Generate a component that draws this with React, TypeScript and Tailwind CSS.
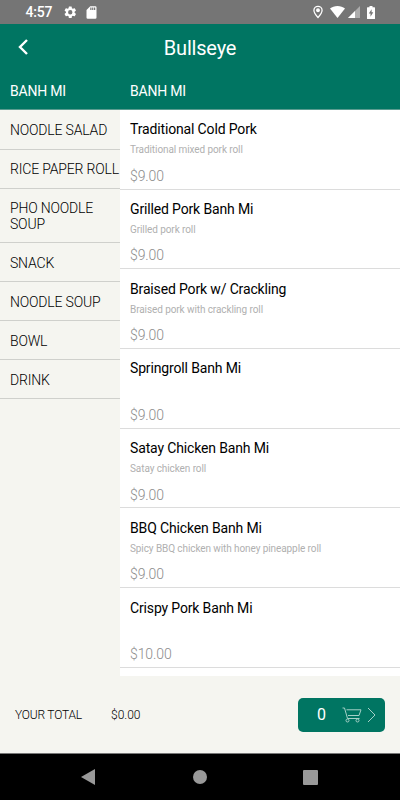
import clsx from 'clsx'

const categories = [
    'BANH MI',
    'NOODLE SALAD',
    'RICE PAPER ROLL',
    'PHO NOODLE SOUP',
    'SNACK',
    'NOODLE SOUP',
    'BOWL',
    'DRINK',
]

const items = [
    { name: 'Traditional Cold Pork', description: 'Traditional mixed pork roll', price: '$9.00' },
    { name: 'Grilled Pork Banh Mi', description: 'Grilled pork roll', price: '$9.00' },
    { name: 'Braised Pork w/ Crackling', description: 'Braised pork with crackling roll', price: '$9.00' },
    { name: 'Springroll Banh Mi', description: '', price: '$9.00' },
    { name: 'Satay Chicken Banh Mi', description: 'Satay chicken roll', price: '$9.00' },
    { name: 'BBQ Chicken Banh Mi', description: 'Spicy BBQ chicken with honey pineapple roll', price: '$9.00' },
    { name: 'Crispy Pork Banh Mi', description: '', price: '$10.00' },
]

function StatusBar() {
    return (
        <div className="flex h-6 shrink-0 items-center bg-[#757575] pl-[25.5px] pr-[25px] text-white">
            <span className="w-[37px] text-[14px] leading-6 font-medium tracking-[-0.2px]">4:57</span>
            <svg viewBox="0 0 24 24" className="size-[14.5px] fill-current">
                <path d="M19.14 12.94c.04-.3.06-.61.06-.94s-.02-.64-.07-.94l2.03-1.58a.49.49 0 0 0 .12-.61l-1.92-3.32a.49.49 0 0 0-.59-.22l-2.39.96a7 7 0 0 0-1.62-.94l-.36-2.54a.48.48 0 0 0-.48-.41h-3.84a.47.47 0 0 0-.47.41l-.36 2.54c-.59.24-1.13.57-1.62.94l-2.39-.96a.48.48 0 0 0-.59.22L2.74 8.87a.47.47 0 0 0 .12.61l2.03 1.58a7 7 0 0 0 0 1.88l-2.03 1.58a.49.49 0 0 0-.12.61l1.92 3.32c.12.22.37.29.59.22l2.39-.96c.5.38 1.03.7 1.62.94l.36 2.54c.05.24.24.41.48.41h3.84c.24 0 .44-.17.47-.41l.36-2.54a7 7 0 0 0 1.62-.94l2.39.96c.22.08.47 0 .59-.22l1.92-3.32a.47.47 0 0 0-.12-.61zM12 15.6a3.6 3.6 0 1 1 0-7.2 3.6 3.6 0 0 1 0 7.2z" />
            </svg>
            <svg viewBox="0 0 24 24" className="ml-[6.5px] size-[15px] fill-current">
                <path d="M18 2h-8L4.02 8 4 20a2 2 0 0 0 2 2h12a2 2 0 0 0 2-2V4a2 2 0 0 0-2-2zm-6 6h-2V4h2v4zm3 0h-2V4h2v4zm3 0h-2V4h2v4z" />
            </svg>
            <svg viewBox="0 0 24 24" className="ml-auto size-[14px] fill-none stroke-current stroke-[2.2]">
                <path d="M12 2.2a7 7 0 0 0-7 7C5 14 12 21.5 12 21.5S19 14 19 9.2a7 7 0 0 0-7-7z" />
                <circle cx="12" cy="9" r="2.2" className="fill-current" />
            </svg>
            <svg viewBox="0 0 15 12" className="ml-[5px] h-3 w-[15px] fill-current">
                <path d="M7.5 12 0 2.6C2 1 4.6 0 7.5 0S13 1 15 2.6z" />
            </svg>
            <svg viewBox="0 0 12 12" className="ml-[3px] size-3 fill-current">
                <path d="M0 12 12 0v12z" className="opacity-40" />
                <path d="M0 12 7 5v7z" />
            </svg>
            <svg viewBox="0 0 8 13" className="ml-[7px] h-[13px] w-2 fill-current">
                <path d="M0 1.8q0-.6.6-.6H2.5V0h3v1.2h1.9q.6 0 .6.6v10.6q0 .6-.6.6H.6q-.6 0-.6-.6z" />
                <path d="M4.6 3.2 1.8 7.5h1.7v3.2l2.8-4.4H4.6z" className="fill-[#757575]" />
            </svg>
        </div>
    )
}

function Header() {
    return (
        <header className="h-[86px] shrink-0 border-b border-[#5a9c90] bg-[#007562] text-white">
            <div className="grid h-12 grid-cols-[60px_1fr_60px] items-center">
                <svg viewBox="0 0 10 16" className="-mt-[2px] ml-[18px] h-4 w-[10px] fill-none stroke-current stroke-[2.4]">
                    <path d="M9 1 2 8l7 7" />
                </svg>
                <h1 className="text-center text-[20px] tracking-[-0.2px]">Bullseye</h1>
            </div>
            <div className="flex h-[38px] items-center pt-px text-[14px] tracking-[-0.2px]">
                <span className="w-[120px] pl-[10px]">{categories[0]}</span>
                <span className="pl-[10px]">{categories[0]}</span>
            </div>
        </header>
    )
}

function Sidebar() {
    return (
        <nav className="w-[120px] shrink-0 pt-[0.5px] text-[14px] leading-4 font-light tracking-[-0.18px]">
            {categories.slice(1).map((category) => (
                <div
                    key={category}
                    className={clsx(
                        'flex items-center border-b border-[#cfd0cc] pt-px pl-[10px]',
                        category.startsWith('PHO') ? 'h-[54.5px]' : 'h-[39px] whitespace-nowrap',
                    )}
                >
                    {category}
                </div>
            ))}
        </nav>
    )
}

function MenuList() {
    return (
        <main className="flex-1 overflow-hidden bg-white">
            {items.map((item) => (
                <div key={item.name} className="h-[79.7px] border-b border-[#dcdcdc] pt-[10.4px] pl-[10px]">
                    <div className="h-[22px] text-[14px] leading-[18px] tracking-[-0.15px]">{item.name}</div>
                    <div className="h-[23.4px] text-[10px] leading-4 tracking-[-0.09px] text-[#b0b0b0]">{item.description}</div>
                    <div className="text-[14px] leading-[20px] font-light tracking-[-0.1px] text-[#8c8c8c]">{item.price}</div>
                </div>
            ))}
        </main>
    )
}

function CartBar() {
    return (
        <div className="flex h-[77px] shrink-0 items-center pr-[15px] pl-[15px] text-[12px]">
            <span className="w-24 pt-px font-light tracking-[-0.2px]">YOUR TOTAL</span>
            <span className="pt-px font-light">$0.00</span>
            <button className="ml-auto flex h-[34px] w-[87px] items-center rounded-[5px] bg-[#007562] text-white">
                <span className="ml-[19px] text-[16px]">0</span>
                <svg viewBox="0 0 20 16" className="ml-auto h-4 w-5 fill-none stroke-[#a5d0c7] stroke-1">
                    <path d="M.5 1H2.5L5.5 11.5h12M4.5 2.8H19L17 8.5H6" />
                    <circle cx="5.5" cy="13.5" r="1.5" />
                    <circle cx="15.500" cy="13.5" r="1.5" />
                </svg>
                <svg viewBox="0 0 9 16" className="mr-[9px] ml-[5px] h-4 w-[9px] fill-none stroke-[#a5d0c7] stroke-1">
                    <path d="m1 1 7 7-7 7" />
                </svg>
            </button>
        </div>
    )
}

function SystemNav() {
    return (
        <div className="flex h-[47px] shrink-0 items-center justify-between border-t border-[#777] bg-black pr-[82px] pl-[81px]">
            <svg viewBox="0 0 14 16" className="h-4 w-[14px] fill-[#999]">
                <path d="M14 0v16L0 8z" />
            </svg>
            <div className="ml-px size-[14px] rounded-full bg-[#999]" />
            <div className="size-[15px] rounded-[1px] bg-[#999]" />
        </div>
    )
}

export default function App() {
    return (
        <div className="flex h-[800px] w-[400px] flex-col overflow-hidden bg-[#f5f5f0] font-[Roboto,sans-serif] text-black">
            <StatusBar />
            <Header />
            <div className="flex h-[566px] shrink-0">
                <Sidebar />
                <MenuList />
            </div>
            <CartBar />
            <SystemNav />
        </div>
    )
}
